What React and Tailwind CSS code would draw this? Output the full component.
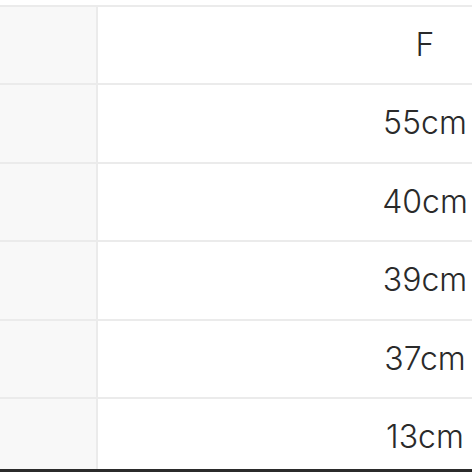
const rows = ["F", "55cm", "40cm", "39cm", "37cm", "13cm"];

export default function App() {
  return (
    <div className="w-[472px] h-[472px] overflow-hidden bg-white relative" style={{ fontFamily: "Inter, 'Liberation Sans', sans-serif" }}>
      <div className="h-[5px]" />
      <div className="w-[752px] border-t-2 border-[#ebebeb]">
        {rows.map((r, i) => (
          <div key={i} className={`flex ${i === 0 ? "h-[78px]" : "h-[78.5px]"} border-b-2 border-[#ebebeb]`}>
            <div className="w-[96px] shrink-0 bg-[#f8f8f8] border-r-2 border-[#ebebeb] box-content" />
            <div className="flex-1 flex items-center justify-center text-[32px] font-light text-[#2a2a2a]">
              {r}
            </div>
          </div>
        ))}
      </div>
      <div className="absolute left-0 bottom-0 w-full h-[3px] bg-[#2b2b2b]" />
    </div>
  );
}
